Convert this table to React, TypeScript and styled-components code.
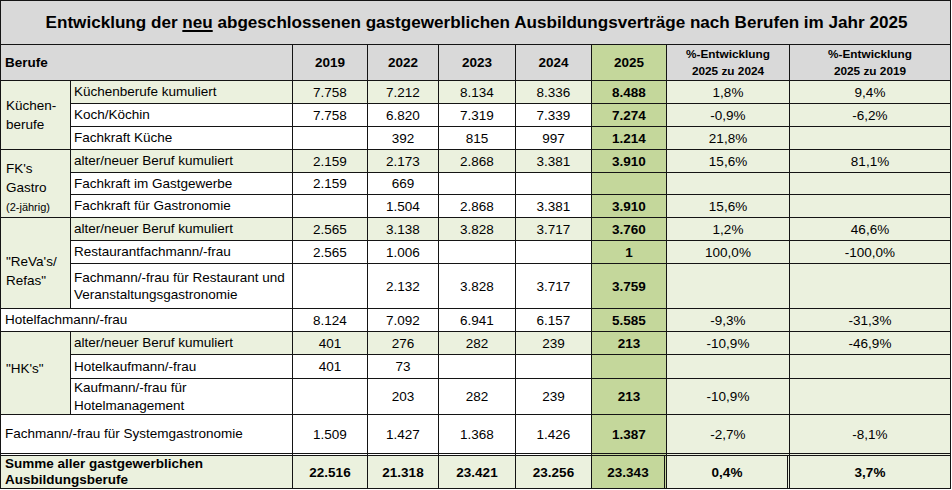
import React from 'react';
import styled, { createGlobalStyle, css } from 'styled-components';

const C = {
  gray: '#D9D9D9',
  light: '#EBF1DE',
  green: '#C4D79B',
  white: '#FFFFFF',
  line: '#141414',
};

const GlobalStyle = createGlobalStyle`
  html, body { margin: 0; padding: 0; background: #fff; }
  body { font-family: 'Liberation Sans', Arial, sans-serif; color: #000; }
  * { box-sizing: border-box; }
`;

const Sheet = styled.div`
  width: 951px;
  border-left: 1px solid ${C.line};
  border-top: 1px solid ${C.line};
`;

const TitleBar = styled.div`
  height: 44px;
  background: ${C.gray};
  border-right: 1px solid ${C.line};
  border-bottom: 1px solid ${C.line};
  display: flex;
  align-items: center;
  justify-content: center;
  font-weight: bold;
  font-size: 17.1px;
  padding-left: 2px;
  u { text-decoration-thickness: 1.5px; text-underline-offset: 2px; }
`;

const Grid = styled.div`
  display: grid;
  grid-template-columns: 70px 222px 75px 71px 77px 76px 75px 123px 161px;
  grid-template-rows: 36px 23px 23px 23px 23px 22px 23px 23px 23px 45px 23px 23px 24px 36px 41px 33px;
`;

type CellProps = {
  $bg?: string;
  $bold?: boolean;
  $span?: number;
  $rows?: number;
  $dblBottom?: boolean;
  $dblRight?: boolean;
};

const BaseCell = styled.div<CellProps>`
  display: flex;
  align-items: center;
  background: ${(p) => p.$bg ?? C.white};
  border-right: ${(p) => (p.$dblRight ? `3px double ${C.line}` : `1px solid ${C.line}`)};
  border-bottom: ${(p) => (p.$dblBottom ? `3px double ${C.line}` : `1px solid ${C.line}`)};
  font-size: 13.5px;
  font-weight: ${(p) => (p.$bold ? 'bold' : 'normal')};
  white-space: pre-line;
  ${(p) => p.$span && css`grid-column: span ${p.$span};`}
  ${(p) => p.$rows && css`grid-row: span ${p.$rows};`}
`;

const HeadCell = styled(BaseCell)<{ $small?: boolean }>`
  justify-content: ${(p) => (p.$span ? 'flex-start' : 'center')};
  text-align: center;
  padding-left: ${(p) => (p.$span ? '4px' : '0')};
  font-weight: bold;
  font-size: ${(p) => (p.$small ? '11.8px' : '13.5px')};
  line-height: ${(p) => (p.$small ? '17px' : '16px')};
`;

const GroupCell = styled(BaseCell)<{ $shift?: number }>`
  padding-left: 5px;
  line-height: 19px;
  padding-top: ${(p) => (p.$shift && p.$shift > 0 ? p.$shift * 2 : 0)}px;
  padding-bottom: ${(p) => (p.$shift && p.$shift < 0 ? -p.$shift * 2 : 0)}px;
`;

const SmallNote = styled.span`
  font-size: 11px;
`;

const LabelCell = styled(BaseCell)`
  padding-left: ${(p) => (p.$span ? '4px' : '3px')};
  line-height: ${(p) => (p.$bold ? '16px' : '17.5px')};
`;

const ValueCell = styled(BaseCell)`
  justify-content: center;
`;

type Row = {
  label: string;
  v: string[];
  kum?: boolean;
};

type Group = { title: React.ReactNode; shift: number; rows: Row[] };

const groups: (Group | { single: Row })[] = [
  {
    title: 'Küchen-\nberufe',
    shift: 0,
    rows: [
      { label: 'Küchenberufe kumuliert', v: ['7.758', '7.212', '8.134', '8.336', '8.488', '1,8%', '9,4%'], kum: true },
      { label: 'Koch/Köchin', v: ['7.758', '6.820', '7.319', '7.339', '7.274', '-0,9%', '-6,2%'] },
      { label: 'Fachkraft Küche', v: ['', '392', '815', '997', '1.214', '21,8%', ''] },
    ],
  },
  {
    title: (
      <>
        {"FK's\nGastro\n"}
        <SmallNote>(2-jährig)</SmallNote>
      </>
    ),
    shift: 4,
    rows: [
      { label: 'alter/neuer Beruf kumuliert', v: ['2.159', '2.173', '2.868', '3.381', '3.910', '15,6%', '81,1%'], kum: true },
      { label: 'Fachkraft im Gastgewerbe', v: ['2.159', '669', '', '', '', '', ''] },
      { label: 'Fachkraft für Gastronomie', v: ['', '1.504', '2.868', '3.381', '3.910', '15,6%', ''] },
    ],
  },
  {
    title: '"ReVa\'s/\nRefas"',
    shift: 8,
    rows: [
      { label: 'alter/neuer Beruf kumuliert', v: ['2.565', '3.138', '3.828', '3.717', '3.760', '1,2%', '46,6%'], kum: true },
      { label: 'Restaurantfachmann/-frau', v: ['2.565', '1.006', '', '', '1', '100,0%', '-100,0%'] },
      {
        label: 'Fachmann/-frau für Restaurant und\nVeranstaltungsgastronomie',
        v: ['', '2.132', '3.828', '3.717', '3.759', '', ''],
      },
    ],
  },
  { single: { label: 'Hotelfachmann/-frau', v: ['8.124', '7.092', '6.941', '6.157', '5.585', '-9,3%', '-31,3%'] } },
  {
    title: '"HK\'s"',
    shift: -5,
    rows: [
      { label: 'alter/neuer Beruf kumuliert', v: ['401', '276', '282', '239', '213', '-10,9%', '-46,9%'], kum: true },
      { label: 'Hotelkaufmann/-frau', v: ['401', '73', '', '', '', '', ''] },
      { label: 'Kaufmann/-frau für\nHotelmanagement', v: ['', '203', '282', '239', '213', '-10,9%', ''] },
    ],
  },
];

const sysRow: Row = {
  label: 'Fachmann/-frau für Systemgastronomie',
  v: ['1.509', '1.427', '1.368', '1.426', '1.387', '-2,7%', '-8,1%'],
};

const sumRow: Row = {
  label: 'Summe aller gastgewerblichen\nAusbildungsberufe',
  v: ['22.516', '21.318', '23.421', '23.256', '23.343', '0,4%', '3,7%'],
};

const years = ['2019', '2022', '2023', '2024'];

function Values({ row, dbl, sum }: { row: Row; dbl?: boolean; sum?: boolean }) {
  return (
    <>
      {row.v.map((val, i) => {
        const isCur = i === 4;
        const isPct = i >= 5;
        const bg = isCur ? C.green : isPct || row.kum || sum ? C.light : C.white;
        return (
          <ValueCell
            key={i}
            $bg={bg}
            $bold={isCur || sum}
            $dblBottom={dbl}
            $dblRight={sum && (i === 4 || i === 5)}
          >
            {val}
          </ValueCell>
        );
      })}
    </>
  );
}

export default function App() {
  return (
    <>
      <GlobalStyle />
      <Sheet>
        <TitleBar>
          <span>
            Entwicklung der <u>neu</u> abgeschlossenen gastgewerblichen Ausbildungsverträge nach Berufen im Jahr 2025
          </span>
        </TitleBar>
        <Grid>
          <HeadCell $bg={C.gray} $span={2}>
            Berufe
          </HeadCell>
          {years.map((y) => (
            <HeadCell key={y} $bg={C.gray}>
              {y}
            </HeadCell>
          ))}
          <HeadCell $bg={C.green}>2025</HeadCell>
          <HeadCell $bg={C.gray} $small>
            {'%-Entwicklung\n2025 zu 2024'}
          </HeadCell>
          <HeadCell $bg={C.gray} $small>
            {'%-Entwicklung\n2025 zu 2019'}
          </HeadCell>

          {groups.map((g, gi) => {
            if ('single' in g) {
              return (
                <React.Fragment key={gi}>
                  <LabelCell $span={2}>{g.single.label}</LabelCell>
                  <Values row={g.single} />
                </React.Fragment>
              );
            }
            return (
              <React.Fragment key={gi}>
                <GroupCell $rows={g.rows.length} $bg={C.light} $shift={g.shift}>
                  <span>{g.title}</span>
                </GroupCell>
                {g.rows.map((r, ri) => (
                  <React.Fragment key={ri}>
                    <LabelCell $bg={r.kum ? C.light : C.white}>{r.label}</LabelCell>
                    <Values row={r} />
                  </React.Fragment>
                ))}
              </React.Fragment>
            );
          })}

          <LabelCell $span={2} $dblBottom>
            {sysRow.label}
          </LabelCell>
          <Values row={sysRow} dbl />

          <LabelCell $span={2} $bold $bg={C.light}>
            {sumRow.label}
          </LabelCell>
          <Values row={sumRow} sum />
        </Grid>
      </Sheet>
    </>
  );
}
